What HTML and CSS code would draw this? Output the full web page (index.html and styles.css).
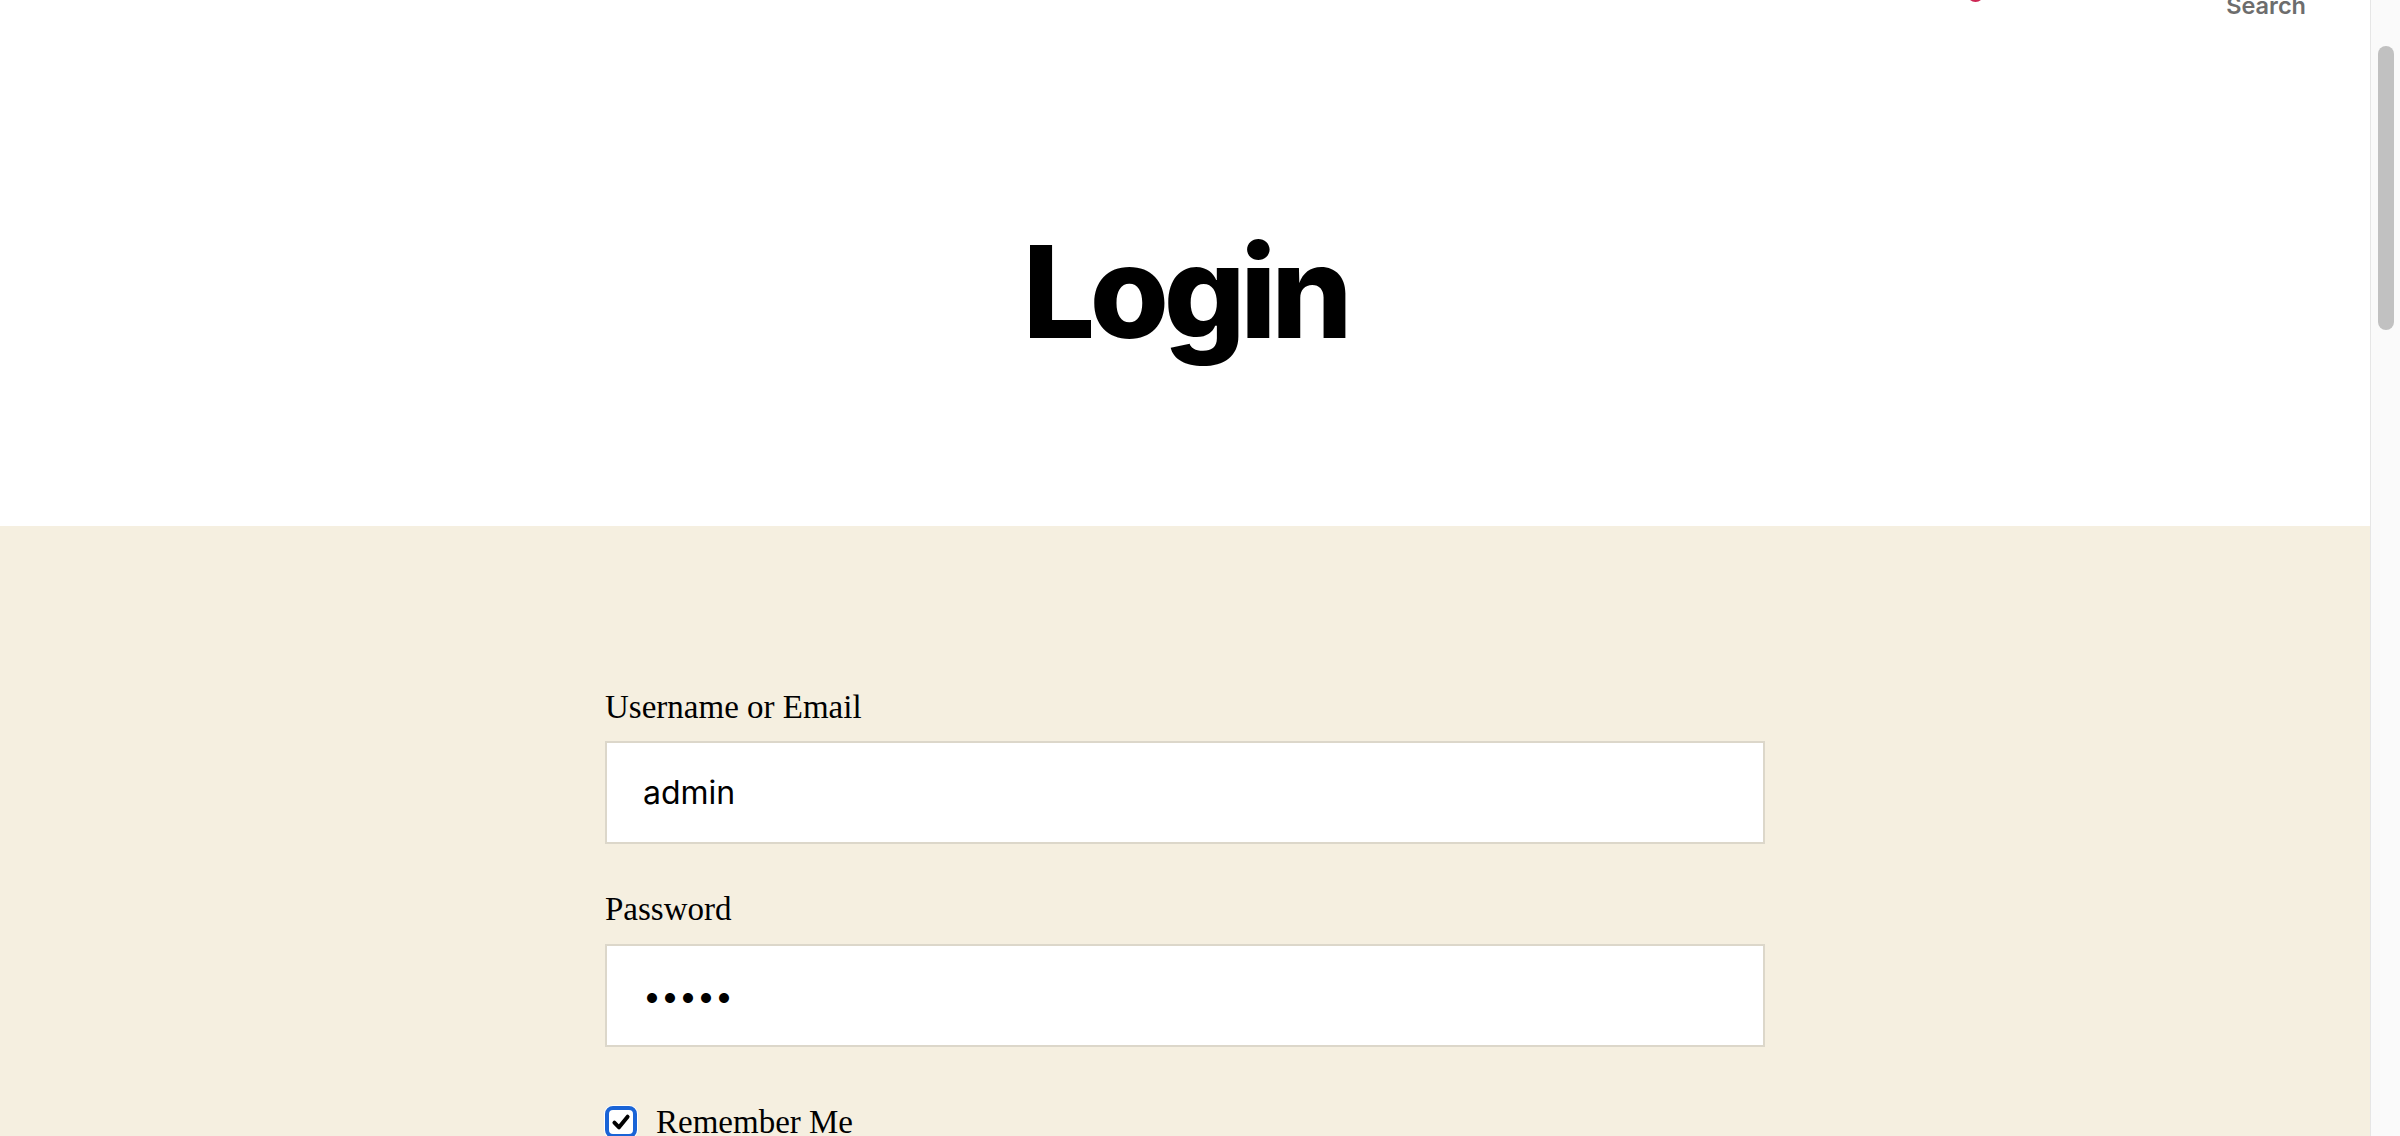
FILE: index.html
```html
<!DOCTYPE html>
<html lang="en">
<head>
<meta charset="utf-8">
<title>Login</title>
<link rel="stylesheet" href="styles.css">
</head>
<body>
<div class="page">
  <main class="main">
    <header class="site-header">
      <span class="toggle toggle-menu"><span class="toggle-icon"></span></span>
      <span class="toggle toggle-search">Search</span>
    </header>
    <section class="entry-header">
      <h1 class="entry-title">Login</h1>
    </section>
    <section class="entry-content">
      <form class="login-form">
        <div class="field">
          <label class="field-label" for="user">Username or Email</label>
          <input class="field-input" id="user" type="text" value="admin">
        </div>
        <div class="field">
          <label class="field-label" for="pass">Password</label>
          <input class="field-input field-password" id="pass" type="password" value="admin">
        </div>
        <label class="remember">
          <span class="checkbox"><svg viewBox="0 0 20 20" width="22" height="22"><path d="M4 10.5 L8.2 14.8 L16 5.2" fill="none" stroke="#000" stroke-width="3.6" stroke-linecap="round" stroke-linejoin="round"/></svg></span>
          <span class="remember-text">Remember Me</span>
        </label>
      </form>
    </section>
  </main>
  <div class="scrollbar"><div class="scrollbar-thumb"></div></div>
</div>
</body>
</html>
```
FILE: styles.css
```css
* { box-sizing: border-box; }
html, body {
  margin: 0;
  padding: 0;
  height: 1136px;
  overflow: hidden;
  background: #fff;
}
.page {
  display: flex;
  height: 1136px;
}
.main {
  flex: 1;
  display: flex;
  flex-direction: column;
  min-width: 0;
}
.site-header {
  height: 20px;
  display: flex;
  justify-content: flex-end;
  align-items: flex-start;
  padding-right: 64px;
  font-family: Inter, "Liberation Sans", sans-serif;
}
.toggle-menu {
  width: 17px;
  margin-right: 242px;
  margin-top: -15px;
}
.toggle-icon {
  display: block;
  width: 17px;
  height: 17px;
  border: 2px solid #cd2653;
  border-radius: 50%;
}
.toggle-search {
  font-size: 23.5px;
  font-weight: 600;
  line-height: 1;
  color: #6d6d6d;
  margin-top: -6px;
}
.entry-header {
  padding: 210px 0 170px;
  text-align: center;
}
.entry-title {
  margin: 0;
  font-family: Inter, "Liberation Sans", sans-serif;
  font-weight: 800;
  font-size: 128px;
  line-height: 1;
  letter-spacing: -0.0415em;
  color: #000;
}
.entry-content {
  flex: 1;
  background: #f5efe0;
  padding-top: 162px;
}
.login-form {
  width: 1160px;
  margin: 0 auto;
  font-family: "Liberation Serif", serif;
}
.field { margin-bottom: 0; }
.field + .field { margin-top: 46px; }
.field-label {
  display: block;
  font-size: 33px;
  line-height: 1.2;
  color: #000;
  margin-bottom: 14px;
}
.field-input {
  display: block;
  width: 100%;
  height: 103px;
  margin: 0;
  border: 2px solid #dcd7ca;
  border-radius: 0;
  background: #fff;
  padding: 0 36px;
  font-family: Inter, "Liberation Sans", sans-serif;
  font-size: 32px;
  color: #000;
  outline: none;
}
.remember {
  display: flex;
  align-items: center;
  gap: 19px;
  margin-top: 56px;
}
.checkbox {
  width: 32px;
  height: 32px;
  border: 4px solid #1a64d6;
  border-radius: 8px;
  background: #fff;
  display: flex;
  align-items: center;
  justify-content: center;
  box-shadow: 0 0 0 1px #fff;
}
.remember-text {
  font-size: 33px;
  line-height: 1.2;
  color: #000;
}
.scrollbar {
  width: 30px;
  flex: none;
  background: #fafafa;
  border-left: 1px solid #e6e6e6;
  padding: 46px 0 0 7px;
}
.scrollbar-thumb {
  width: 16px;
  height: 284px;
  border-radius: 8px;
  background: #c1c1c1;
}
```
